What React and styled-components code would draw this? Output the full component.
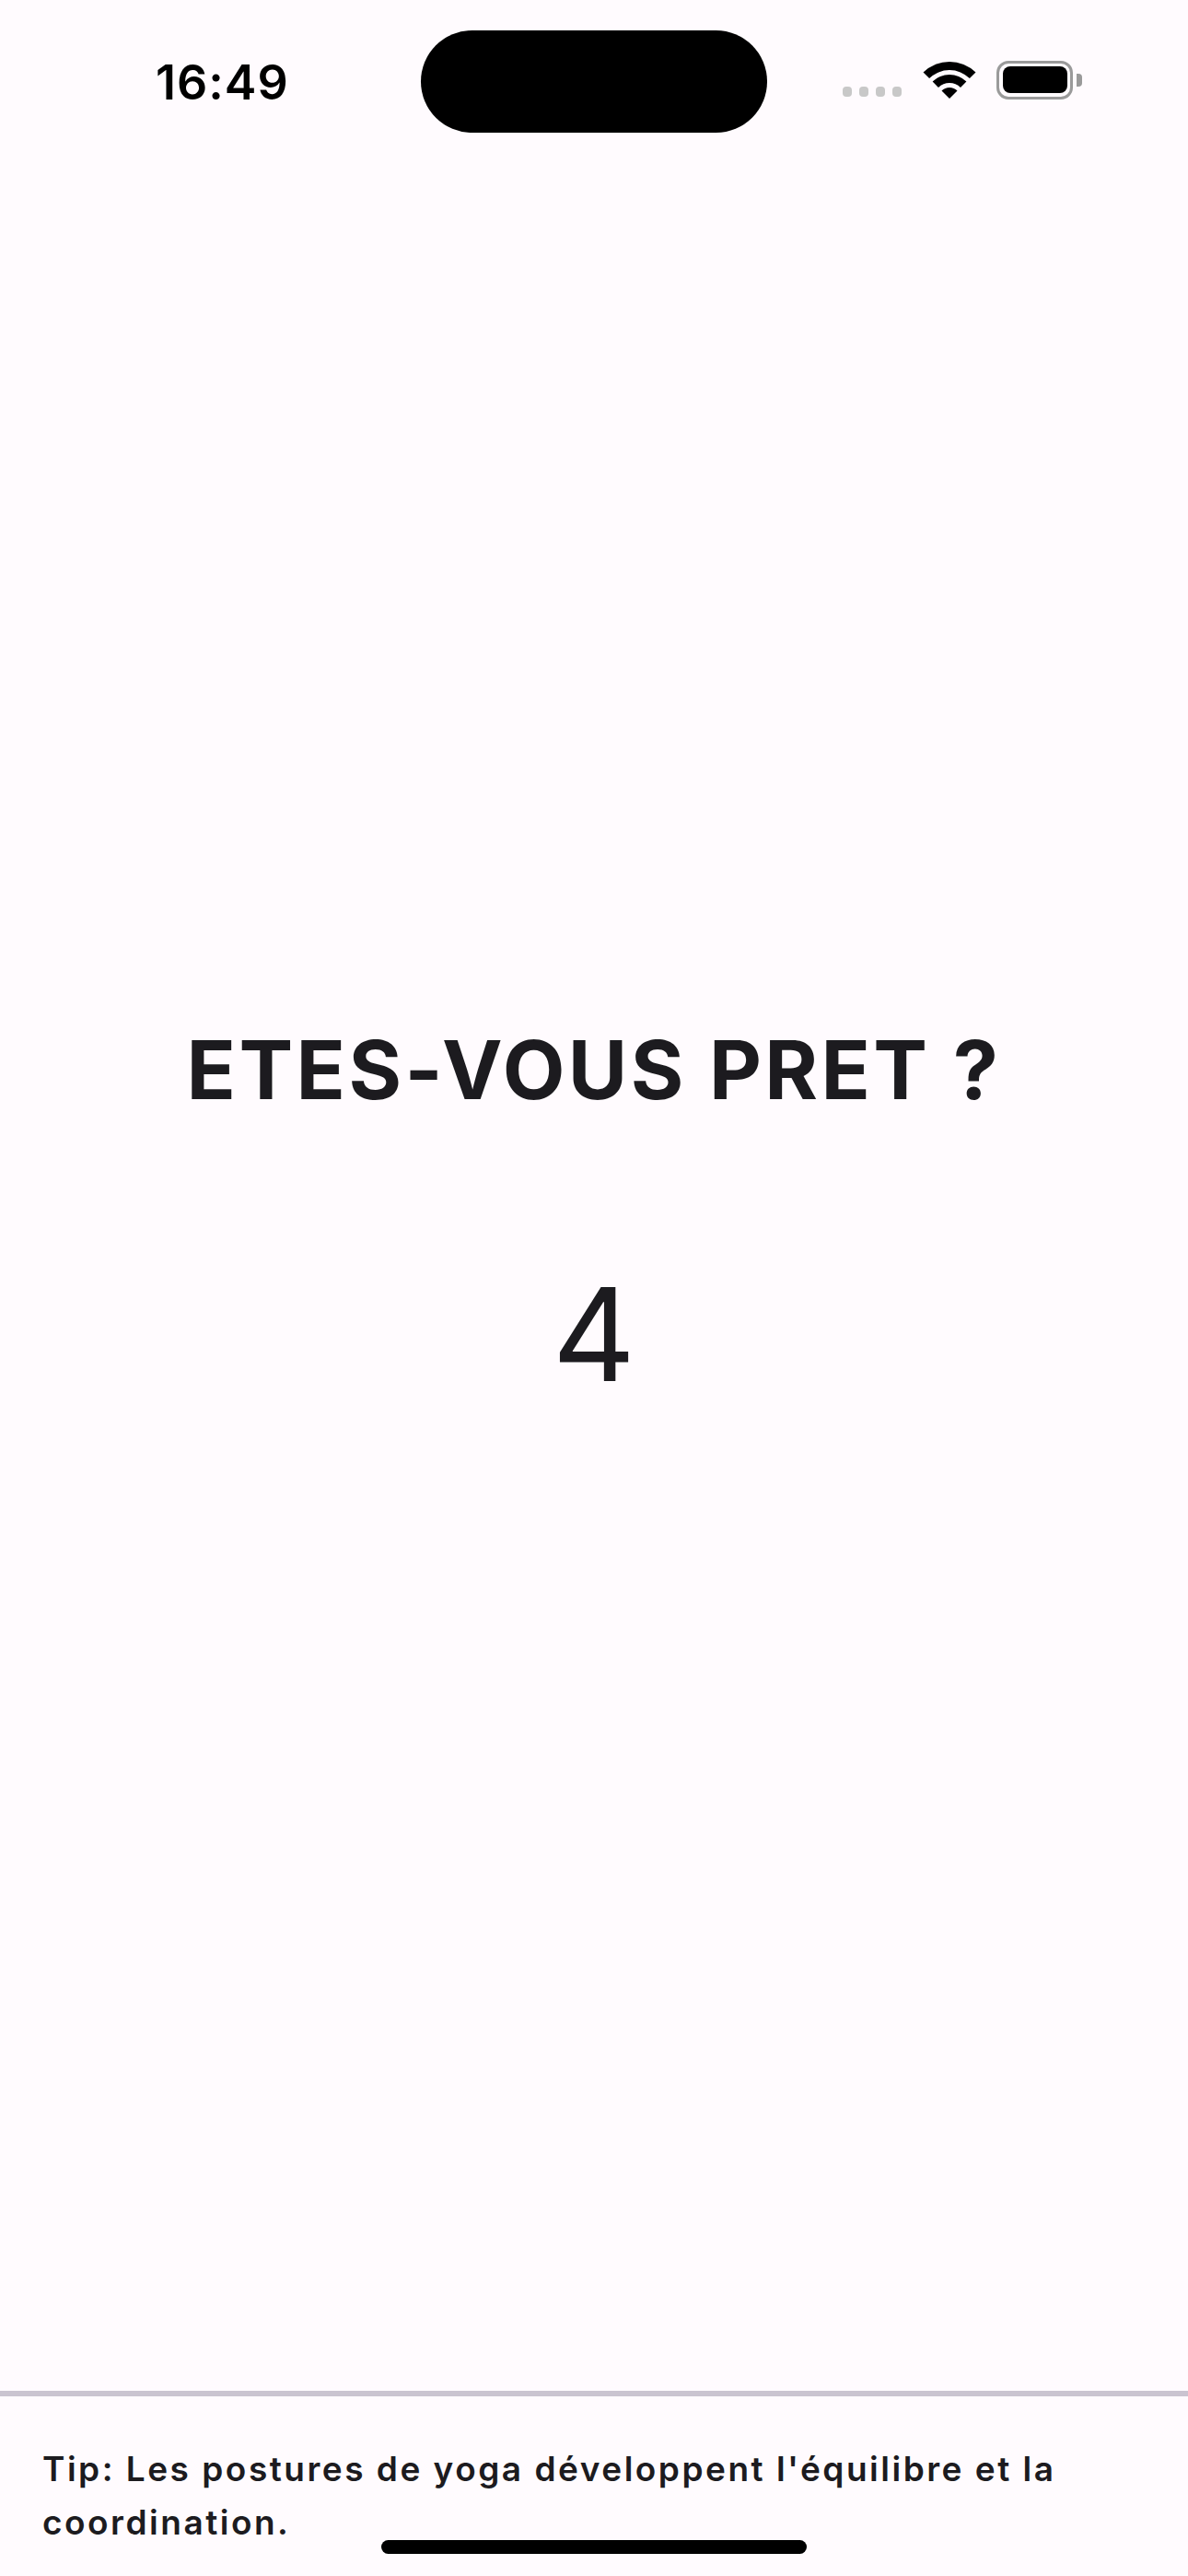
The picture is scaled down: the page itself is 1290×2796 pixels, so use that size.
import styled, { createGlobalStyle } from "styled-components";

const GlobalStyle = createGlobalStyle`
  html, body {
    margin: 0;
    padding: 0;
    background: #fffbfe;
  }
  * { box-sizing: border-box; }
`;

function WifiIcon() {
  return (
    <svg width="58" height="41" viewBox="0 0 58 41">
      <path d="M0.5 12.5 A41 41 0 0 1 57.5 12.5 L50.9 19.1 A31 31 0 0 0 7.1 19.1 Z" fill="#000" />
      <path d="M10.6 22.6 A26 26 0 0 1 47.4 22.6 L41 29 A17 17 0 0 0 17 29 Z" fill="#000" />
      <path d="M20.5 32.5 A12 12 0 0 1 37.5 32.5 L29 41 Z" fill="#000" />
    </svg>
  );
}

export default function App() {
  return (
    <Screen>
      <GlobalStyle />
      <StatusBar>
        <Time>16:49</Time>
        <Island />
        <StatusIcons>
          <Signal>
            <Dot />
            <Dot />
            <Dot />
            <Dot />
          </Signal>
          <WifiIcon />
          <Battery>
            <BatteryBody>
              <BatteryFill />
            </BatteryBody>
            <BatteryCap />
          </Battery>
        </StatusIcons>
      </StatusBar>

      <Content>
        <Title>ETES-VOUS PRET ?</Title>
        <Countdown>4</Countdown>
      </Content>

      <Footer>
        <Tip>Tip: Les postures de yoga développent l'équilibre et la coordination.</Tip>
        <HomeIndicator />
      </Footer>
    </Screen>
  );
}

const Screen = styled.div`
  width: 1290px;
  height: 2796px;
  background: #fffbfe;
  display: flex;
  flex-direction: column;
  font-family: Inter, "Noto Sans", sans-serif;
  color: #1c1b1f;
  overflow: hidden;
`;

const StatusBar = styled.div`
  display: flex;
  align-items: center;
  padding-top: 33px;
  padding-left: 169px;
  height: 144px;
`;

const Time = styled.div`
  width: 144px;
  font-size: 52px;
  font-weight: 600;
  color: #000;
  letter-spacing: 1px;
  line-height: 1;
  padding-top: 2px;
  white-space: nowrap;
`;

const Island = styled.div`
  margin-left: 144px;
  width: 376px;
  height: 111px;
  border-radius: 56px;
  background: #000;
`;

const StatusIcons = styled.div`
  margin-left: 82px;
  display: flex;
  align-items: center;
  margin-top: -4px;
`;

const Signal = styled.div`
  display: flex;
  gap: 8px;
  margin-top: 26px;
  margin-right: 23px;
`;

const Dot = styled.div`
  width: 10px;
  height: 11px;
  border-radius: 4px;
  background: #c8c8c8;
`;

const Battery = styled.div`
  display: flex;
  align-items: center;
  margin-left: 22px;
`;

const BatteryBody = styled.div`
  width: 83px;
  height: 42px;
  border: 3.5px solid #9a9a9a;
  border-radius: 13px;
  padding: 3.5px;
`;

const BatteryFill = styled.div`
  width: 100%;
  height: 100%;
  background: #000;
  border-radius: 8px;
`;

const BatteryCap = styled.div`
  width: 6px;
  height: 14px;
  margin-left: 4px;
  background: #9a9a9a;
  border-radius: 0 4px 4px 0;
`;

const Content = styled.div`
  flex: 1;
  display: flex;
  flex-direction: column;
  align-items: center;
  justify-content: center;
  padding-bottom: 98px;
`;

const Title = styled.h1`
  margin: 0;
  font-size: 88px;
  font-weight: 700;
  line-height: 1.2;
  letter-spacing: 3.4px;
  text-align: center;
`;

const Countdown = styled.div`
  margin-top: 150px;
  font-size: 140px;
  font-weight: 400;
  line-height: 1.2;
`;

const Footer = styled.footer`
  position: relative;
  height: 201px;
  border-top: 6px solid #cac4d0;
  padding: 50px 46px 0;
`;

const Tip = styled.p`
  margin: 0;
  font-size: 37px;
  font-weight: 600;
  line-height: 58px;
  letter-spacing: 2.5px;
`;

const HomeIndicator = styled.div`
  position: absolute;
  left: 414px;
  bottom: 24px;
  width: 462px;
  height: 15px;
  border-radius: 8px;
  background: #000;
`;
